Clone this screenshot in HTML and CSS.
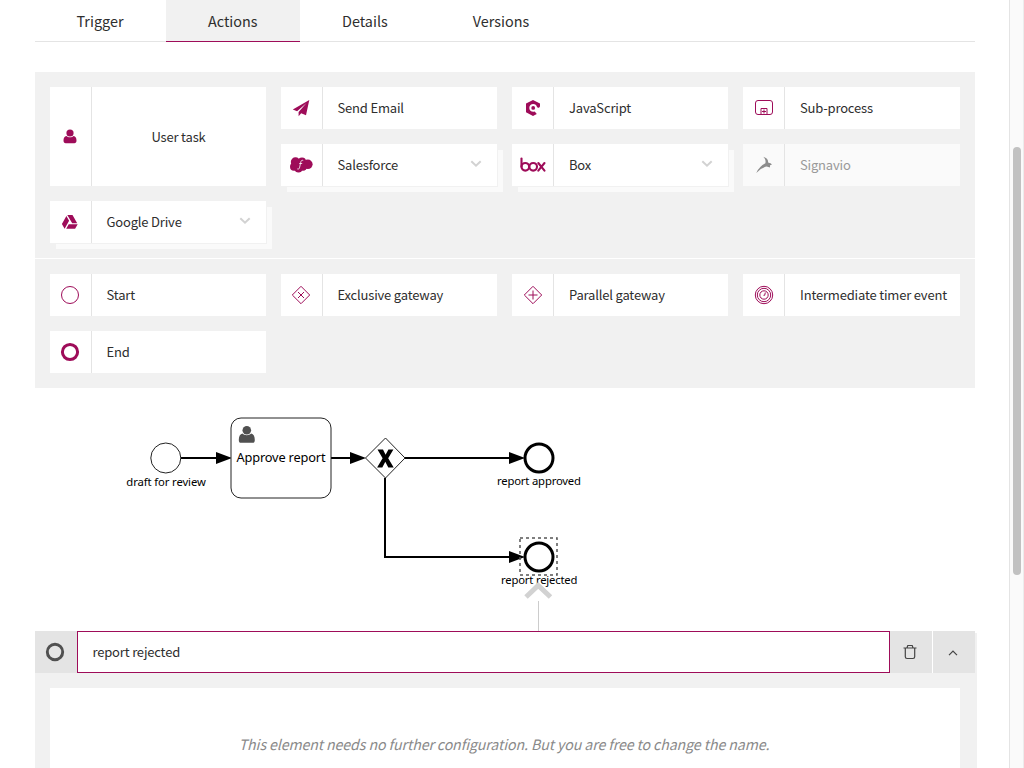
FILE: index.html
```html
<!DOCTYPE html>
<html lang="en">
<head>
<meta charset="utf-8">
<title>Workflow editor</title>
<link rel="stylesheet" href="styles.css">
</head>
<body>
<div class="app">
<main class="page">
  <nav class="tabs">
    <a class="tab">Trigger</a>
    <a class="tab active">Actions</a>
    <a class="tab">Details</a>
    <a class="tab">Versions</a>
  </nav>
  <section class="palette">
    <div class="group">
      <div class="item tall">
        <span class="icon"><svg width="14" height="15" viewBox="0 0 14 15"><circle cx="7" cy="4" r="3.6"/><path d="M3.4 7C5 8.7 9 8.7 10.6 7c2 .4 2.9 2 2.9 4.600 0 2-.8 2.600-2.200 2.600H2.700C1.300 14.200.5 13.600.5 11.600.5 9 1.400 7.400 3.400 7z"/></svg></span>
        <span class="label">User task</span>
      </div>
      <div class="item">
        <span class="icon"><svg width="18" height="18" viewBox="0 0 18 18"><path d="M17.300 1 .8 10.400l4.300 1.800L14.500 4 6.600 13v4.200l2.600-3 4.800 2z"/></svg></span>
        <span class="label">Send Email</span>
      </div>
      <div class="item wide-icon">
        <span class="icon"><svg width="16" height="18" viewBox="0 0 16 18"><path d="M8 1 1 4.500V13.300L8 17l3.800-2.100-2.100-2.300C6.700 13.400 4.300 11.500 4.300 8.900c0-2.300 1.800-3.900 3.900-3.900 2 0 3.300 1.200 3.800 3 .8 1.500 3 .8 3-1V4.500z"/><circle cx="8.200" cy="8.900" r="1.900"/></svg></span>
        <span class="label">JavaScript</span>
      </div>
      <div class="item wide-icon">
        <span class="icon"><svg width="20" height="18" viewBox="0 0 20 18" class="line"><rect x="1.500" y="1.500" width="17" height="14" rx="2.500"/><path d="M7 15.500V9.500h6V15.500M10 10.500v4M8 12.500h4"/></svg></span>
        <span class="label">Sub-process</span>
      </div>
      <div class="item stacked">
        <span class="icon"><svg width="24" height="18" viewBox="0 0 24 18"><circle cx="6.500" cy="6" r="4.700"/><circle cx="13" cy="5.500" r="4"/><circle cx="18.800" cy="8.300" r="4.800"/><circle cx="5" cy="10.700" r="4"/><circle cx="9.500" cy="12.300" r="4.300"/><circle cx="14" cy="10.500" r="4.200"/><path class="cut" d="M14.200 4.500c-1.500-.7-2.200.3-2.600 2.300l-.9 4.300c-.4 1.800-1.200 2.400-2.400 1.800M10.200 7.500h3"/></svg></span>
        <span class="label">Salesforce</span>
        <svg class="chev" width="12" height="8" viewBox="0 0 12 8"><path d="M1.300 1.300 6 5.700l4.700-4.400"/></svg>
      </div>
      <div class="item stacked wide-icon">
        <span class="icon"><svg width="26" height="16" viewBox="0 0 26 16" class="logo"><path d="M1.500 1.500v8.300"/><circle cx="5.300" cy="9.800" r="3.800"/><circle cx="13.200" cy="9.800" r="3.800"/><path d="M18.300 6l6.200 7.600M24.500 6l-6.200 7.600"/></svg></span>
        <span class="label">Box</span>
        <svg class="chev" width="12" height="8" viewBox="0 0 12 8"><path d="M1.300 1.300 6 5.700l4.700-4.400"/></svg>
      </div>
      <div class="item disabled wide-icon">
        <span class="icon"><svg width="18" height="18" viewBox="0 0 18 18"><path d="M8.300.8c3.500 1 5 3.200 4.800 5.700l2.900 1 .8 1.500-1.600.1-.3 2.300-3.200-.8C9.500 11 8 12.300 5.800 13L1.300 17l1.500-3 3-3.500c1.700-1.700 3-2.500 4.600-3.300.4-2.200.2-3.900-2.100-6.400z"/></svg></span>
        <span class="label">Signavio</span>
      </div>
      <div class="item stacked">
        <span class="icon"><svg width="18" height="16" viewBox="0 0 18 16"><path d="M6.300 1h5.200l4.700 8.300h-5zM5.400 2l2.700 4.700L3.600 14.700.9 10.100zM7.700 10.300h9l-2.600 4.500H5.200z"/></svg></span>
        <span class="label">Google Drive</span>
        <svg class="chev" width="12" height="8" viewBox="0 0 12 8"><path d="M1.300 1.300 6 5.700l4.700-4.400"/></svg>
      </div>
    </div>
    <div class="group">
      <div class="item">
        <span class="icon"><svg width="20" height="20" viewBox="0 0 20 20" class="line"><circle cx="10" cy="10" r="8.500"/></svg></span>
        <span class="label">Start</span>
      </div>
      <div class="item">
        <span class="icon"><svg width="20" height="20" viewBox="0 0 20 20" class="line"><path d="M10 1.300 18.700 10 10 18.700 1.300 10zM7 7l6 6M13 7l-6 6"/></svg></span>
        <span class="label">Exclusive gateway</span>
      </div>
      <div class="item wide-icon">
        <span class="icon"><svg width="20" height="20" viewBox="0 0 20 20" class="line"><path d="M10 1.300 18.700 10 10 18.700 1.300 10zM10 5.500v9M5.500 10h9"/></svg></span>
        <span class="label">Parallel gateway</span>
      </div>
      <div class="item wide-icon">
        <span class="icon"><svg width="20" height="20" viewBox="0 0 20 20" class="line"><circle cx="10" cy="10" r="8.700"/><circle cx="10" cy="10" r="6.700"/><circle cx="10" cy="10" r="4.200"/><path d="M11.300 7.500 10.700 10.300H9.500"/></svg></span>
        <span class="label">Intermediate timer event</span>
      </div>
      <div class="item">
        <span class="icon"><svg width="20" height="20" viewBox="0 0 20 20" class="ring"><circle cx="10" cy="10" r="7.600"/></svg></span>
        <span class="label">End</span>
      </div>
    </div>
  </section>
  <svg class="diagram" width="940" height="243" viewBox="35 388 940 243">
    <g class="flow">
      <path d="M181 458h38M331 458h22M405 458h108M385 478v79h126"/>
    </g>
    <g class="arrow">
      <path d="M216 452v12l16-6zM350 452v12l16-6zM509 452v12l16-6zM509 551v12l16-6z"/>
    </g>
    <circle class="thin" cx="165.800" cy="458" r="15"/>
    <rect class="thin" x="231" y="418" width="100" height="80" rx="10"/>
    <g class="person"><circle cx="246.800" cy="430.300" r="4.300"/><path d="M242.500 433.500c2 2.300 6.600 2.300 8.600 0 2.500.6 3.700 2.700 3.700 6.500 0 2-.8 2.800-2 2.800h-12c-1.200 0-2-.8-2-2.800 0-3.800 1.200-5.900 3.700-6.500z"/></g>
    <path class="thin" d="M385.500 438 405 458 385.500 478 365.500 458z"/>
    <path class="cross" d="M377.500 449.500h5.500l2.600 5.200 2.800-5.200h5l-5.200 8.800 5.500 9.200h-5.400l-3-5.700-3 5.700h-5.200l5.500-9.200z"/>
    <circle class="thick" cx="539" cy="458" r="14"/>
    <circle class="thick" cx="539" cy="557" r="14"/>
    <rect class="select" x="520" y="538" width="37" height="37"/>
    <text x="126.300" y="486" textLength="79.500">draft for review</text>
    <text class="big" x="236.500" y="462" textLength="89">Approve report</text>
    <text x="497" y="485" textLength="84">report approved</text>
    <text x="501" y="584" textLength="76.500">report rejected</text>
    <path class="pointer" d="M526 597 538.200 585.500 550.500 597"/>
    <path class="stem" d="M538.500 601v30"/>
  </svg>
  <section class="editor">
    <div class="bar">
      <span class="type"><svg width="20" height="20" viewBox="0 0 20 20" class="ring"><circle cx="10" cy="10" r="7.700"/></svg></span>
      <div class="name">report rejected</div>
      <span class="btn"><svg width="14" height="16" viewBox="0 0 14 16"><path d="M.5 4h13M2.300 4v8.800q0 1.700 1.700 1.700h6q1.700 0 1.700-1.700V4M4 3.800l.8-2.300h4.400l.8 2.300"/></svg></span>
      <span class="btn"><svg width="10" height="8" viewBox="0 0 10 8"><path d="M1 7.200 5 3l4 4.200"/></svg></span>
    </div>
    <div class="body"><p class="hint">This element needs no further configuration. But you are free to change the name.</p></div>
  </section>
</main>
<div class="scroll"><div class="thumb"></div></div>
</div>
</body>
</html>
```
FILE: styles.css
```css
* { box-sizing: border-box; }
body {
  margin: 0;
  height: 768px;
  overflow: hidden;
  background: #fff;
  color: #2e2e2e;
  font-family: "Noto Sans CJK SC", "Noto Sans", sans-serif;
  font-size: 13px;
  letter-spacing: -.18px;
}
svg { display: block; flex: none; }
.app { display: flex; height: 768px; overflow: hidden; }
.page { width: 1009px; padding: 0 34px 0 35px; overflow: hidden; }

.tabs { display: flex; width: 940px; height: 42px; border-bottom: 1px solid #e4e4e4; }
.tab { height: 42px; padding: 0 42.500px 0 41.500px; line-height: 42px; font-size: 14.400px; letter-spacing: 0; white-space: nowrap; }
.tab.active { padding: 0 42px; background: #f1f1f1; border-bottom: 1px solid #9e0c59; }
.tab.active ~ .tab { padding: 0 42.500px; }

.palette { width: 940px; margin-top: 30px; background: #f1f1f1; }
.group { display: grid; grid-template-columns: repeat(3, 216px) 1fr; grid-auto-rows: 42px; gap: 15px; padding: 15px; }
.group + .group { border-top: 1px solid #fff; }
.item { display: flex; align-items: center; min-width: 0; background: #fff; }
.item.tall { grid-row: span 2; }
.item.stacked { box-shadow: 0 0 0 1px #f1f1f1, 6px 6px 0 #fafafa; }
.item.disabled { background: #fafafa; color: #999; }
.icon { display: flex; flex: none; align-items: center; justify-content: center; align-self: stretch; width: 42px; padding-right: 1px; border-right: 1px solid #e4e4e4; fill: #9e0c59; }
.wide-icon .icon { padding-right: 0; }
.disabled .icon { fill: #8c8c8c; }
.label { flex: 1; padding: 0 0 1px 14.500px; white-space: nowrap; }
.wide-icon .label { padding-left: 15px; }
.tall .label { padding: 0 1px 0 0; text-align: center; }
.line { fill: none; stroke: #9e0c59; stroke-width: 1; }
.ring { fill: none; stroke: #9e0c59; stroke-width: 3; }
.logo { fill: none; stroke: #9e0c59; stroke-width: 2.100; stroke-linecap: round; }
.cut { fill: none; stroke: #fff; stroke-width: .8; }
.chev { margin: 0 15px 3px 0; fill: none; stroke: #d2d2d2; stroke-width: 2; }

.diagram { font-family: "Noto Sans", sans-serif; font-size: 11.300px; letter-spacing: 0; fill: #000; }
.diagram .big { font-size: 12.800px; }
.flow { fill: none; stroke: #000; stroke-width: 2; }
.thin { fill: #fff; stroke: #222; stroke-width: 1; }
.thick { fill: #fff; stroke: #000; stroke-width: 3; }
.person { fill: #505050; }
.select { fill: none; stroke: #555; stroke-width: 1.500; stroke-dasharray: 3 3; }
.pointer { fill: none; stroke: #d2d2d2; stroke-width: 5; }
.stem { stroke: #ccc; stroke-width: 1; }

.editor { width: 940px; height: 137px; background: #f1f1f1; box-shadow: 2px 2px 0 #f1f1f1; }
.bar { display: flex; height: 42px; }
.type, .btn { display: flex; align-items: center; justify-content: center; width: 42px; padding-right: 2px; background: #e4e4e4; }
.type .ring { stroke: #505050; stroke-width: 2.900; }
.name { flex: 1; padding-left: 14.500px; border: 1px solid #9e0c59; background: #fff; line-height: 40px; }
.btn { fill: none; stroke: #444; stroke-width: 1.200; }
.btn + .btn { width: 43px; border-left: 1px solid #fff; }
.body { margin: 15px 15px 0; height: 80px; background: #fff; overflow: hidden; }
.hint { margin: 0; padding: 44px 2px 0 0; line-height: 24px; text-align: center; font-size: 14.200px; letter-spacing: -.11px; font-style: italic; color: #8a8a8a; white-space: nowrap; }

.scroll { width: 15px; padding: 147px 2px 0 3px; border-left: 1px solid #e4e4e4; border-right: 1px solid #ececec; background: #fafafa; }
.thumb { width: 8px; height: 428px; border-radius: 4px; background: #c1c1c1; }
```
